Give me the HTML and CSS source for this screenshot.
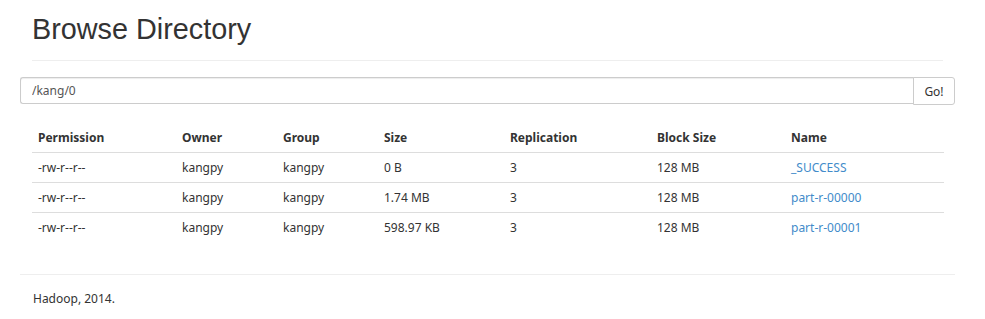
FILE: index.html
```html
<!DOCTYPE html>
<html>
<head>
<meta charset="utf-8">
<link rel="stylesheet" href="styles.css">
</head>
<body>
<div class="container">
  <div class="page-header">
    <h1>Browse Directory</h1>
  </div>
  <form class="search">
    <input class="path" type="text" value="/kang/0">
    <button class="go" type="button">Go!</button>
  </form>
  <table class="listing">
    <thead>
      <tr><th class="c1">Permission</th><th class="c2">Owner</th><th class="c3">Group</th><th class="c4">Size</th><th class="c5">Replication</th><th class="c6">Block Size</th><th class="c7">Name</th></tr>
    </thead>
    <tbody>
      <tr><td>-rw-r--r--</td><td>kangpy</td><td>kangpy</td><td>0 B</td><td>3</td><td>128 MB</td><td><a href="#">_SUCCESS</a></td></tr>
      <tr><td>-rw-r--r--</td><td>kangpy</td><td>kangpy</td><td>1.74 MB</td><td>3</td><td>128 MB</td><td><a href="#">part-r-00000</a></td></tr>
      <tr><td>-rw-r--r--</td><td>kangpy</td><td>kangpy</td><td>598.97 KB</td><td>3</td><td>128 MB</td><td><a href="#">part-r-00001</a></td></tr>
    </tbody>
  </table>
  <footer class="footer">
    <p>Hadoop, 2014.</p>
  </footer>
</div>
</body>
</html>
```

FILE: styles.css
```css
* { box-sizing: border-box; }
html, body { margin: 0; padding: 0; background: #fff; }
body {
  font-family: "Noto Sans", "Open Sans", sans-serif;
  font-size: 12px;
  color: #333;
}
.container {
  width: 935px;
  margin-left: 20px;
}
.page-header {
  margin: 0 12px;
  padding-top: 12px;
  height: 61px;
  border-bottom: 1px solid #eee;
}
.page-header h1 {
  margin: 0;
  font-family: "Liberation Sans", Arial, sans-serif;
  font-weight: 400;
  font-size: 28.8px;
  line-height: 34px;
  color: #333;
}
.search {
  display: flex;
  margin: 16px 0 0 0;
  height: 28px;
}
.path {
  flex: 1;
  height: 27px;
  border: 1px solid #ccc;
  border-right: none;
  border-radius: 3px 0 0 3px;
  padding: 0 11px;
  font-family: inherit;
  font-size: 12px;
  color: #555;
  box-shadow: inset 0 1px 1px rgba(0,0,0,0.075);
  outline: none;
}
.go {
  width: 42px;
  height: 28px;
  border: 1px solid #ccc;
  border-radius: 0 3px 3px 0;
  background: #fff;
  font-family: inherit;
  font-size: 12px;
  color: #333;
  padding: 0;
  margin-left: -1px;
}
.listing {
  margin: 19px 0 0 12px;
  width: 912px;
  border-collapse: collapse;
}
.listing th, .listing td {
  text-align: left;
  padding: 0 6px;
  height: 30px;
  white-space: nowrap;
}
.listing th {
  font-weight: 700;
  height: 28px;
  border-bottom: 1px solid #ddd;
}
.listing td { border-bottom: 1px solid #ddd; }
.listing tbody tr:last-child td { border-bottom: none; }
.c1 { width: 144px; }
.c2 { width: 101px; }
.c3 { width: 101px; }
.c4 { width: 126px; }
.c5 { width: 147px; }
.c6 { width: 134px; }
.listing a { color: #428bca; text-decoration: none; }
.footer {
  margin-top: 32px;
  border-top: 1px solid #eee;
  padding: 12px 13px 0;
}
.footer p { margin: 0; line-height: 24px; }
```
